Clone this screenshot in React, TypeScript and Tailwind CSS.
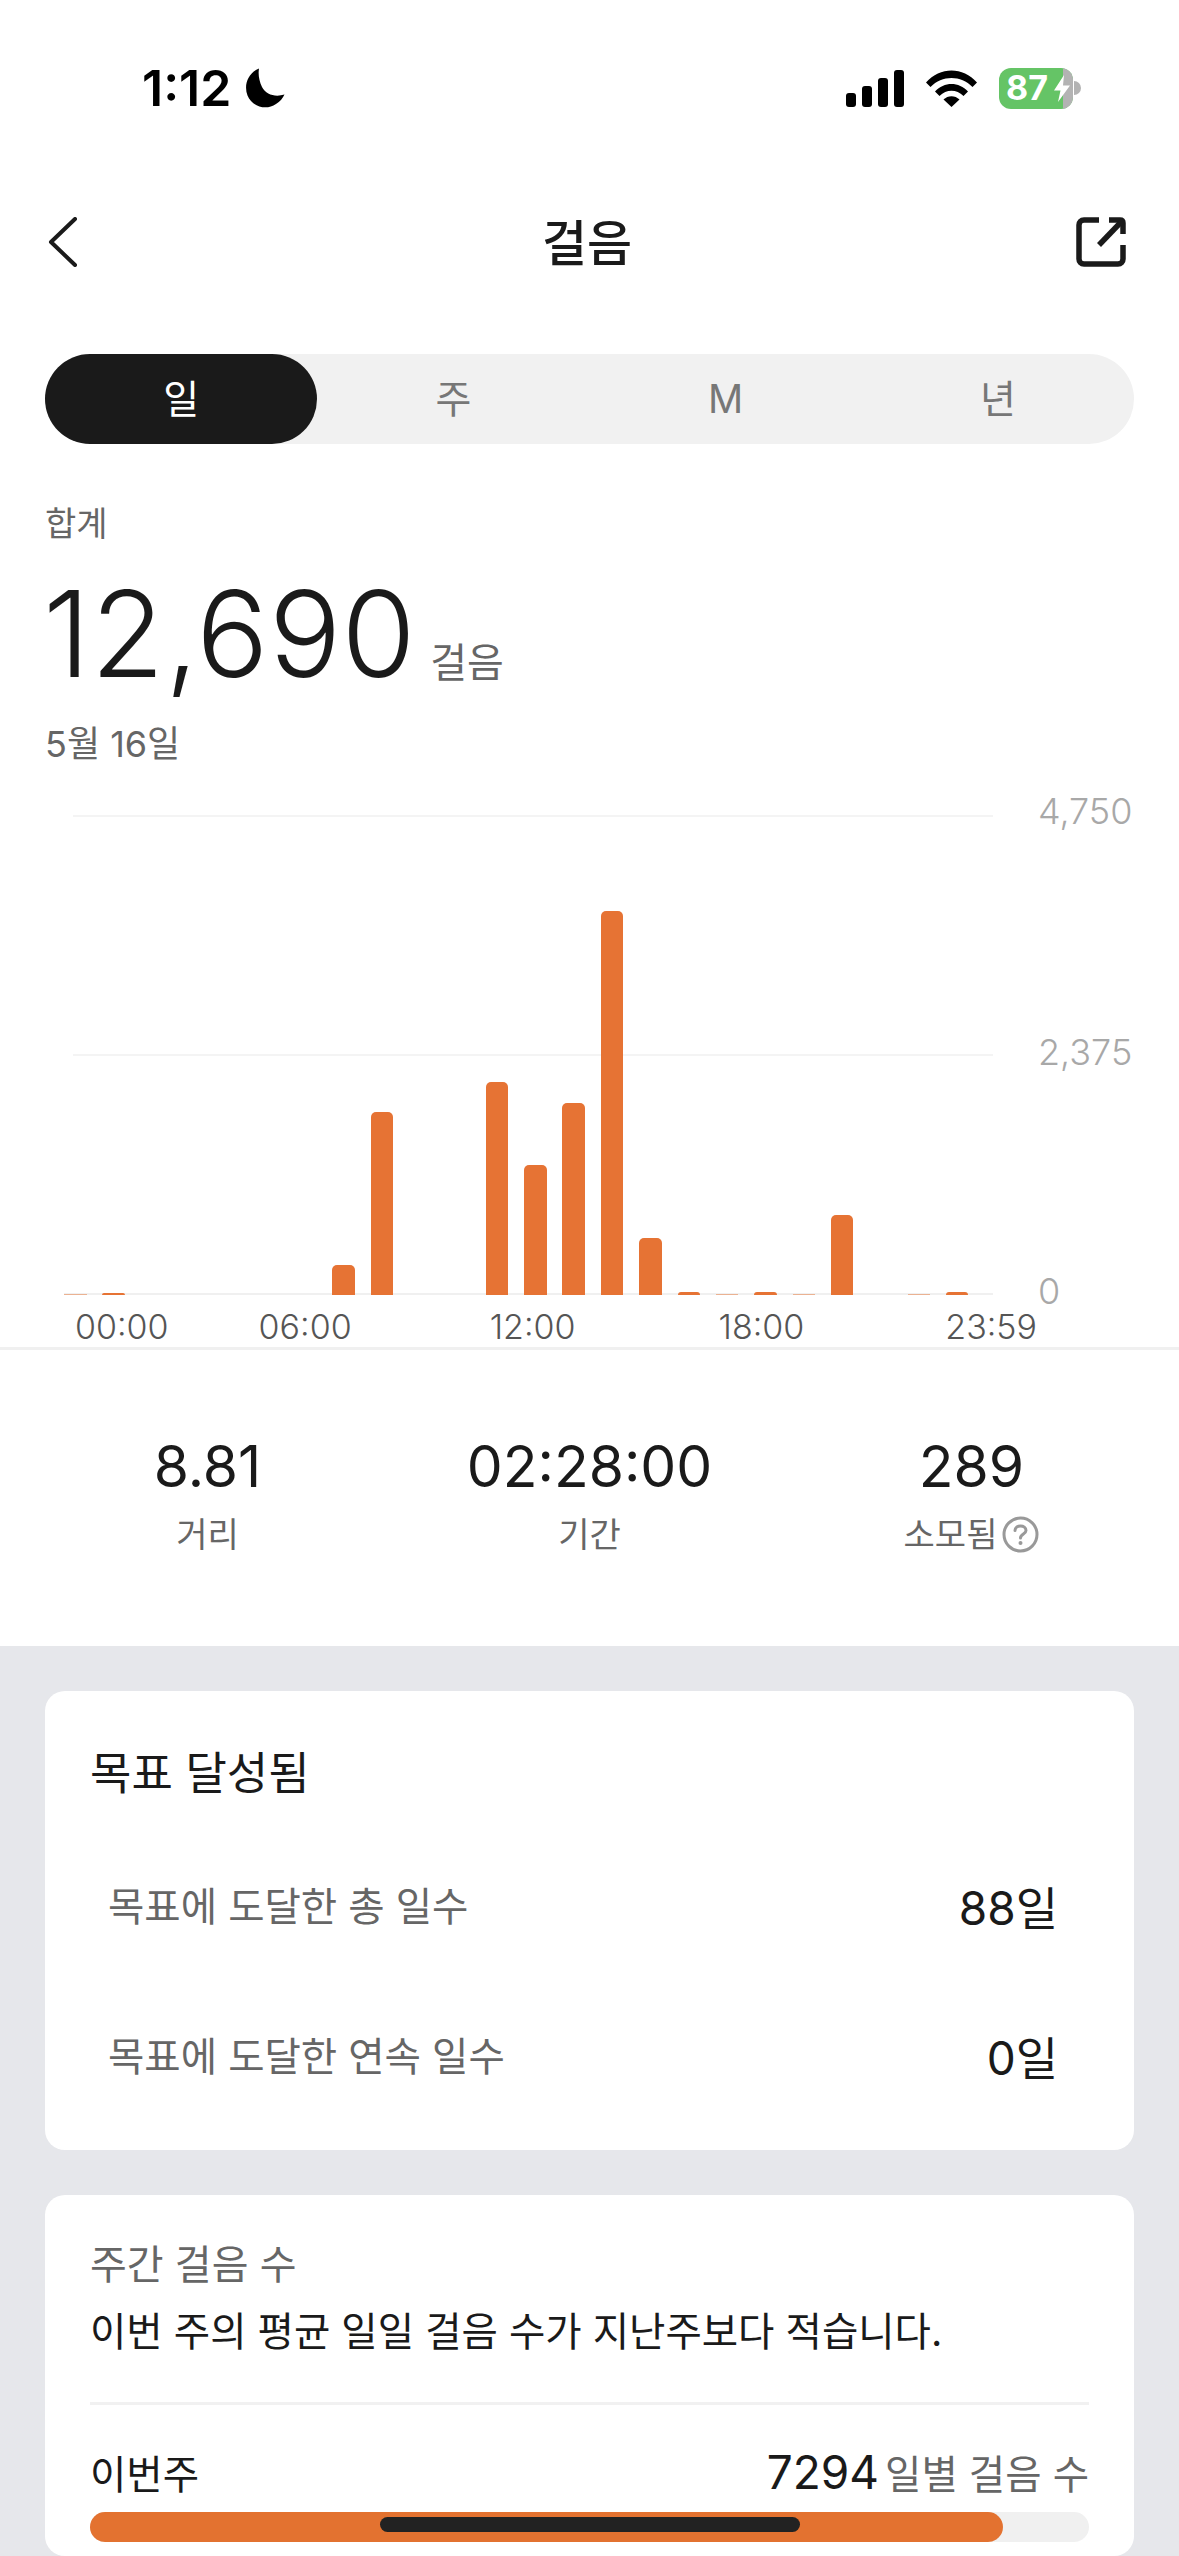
const BARS = [
  0.8, 2.5, 0, 0, 0, 0, 0, 30, 183, 0, 0, 213, 130, 192, 384, 57, 3, 1, 3, 1, 80, 0, 0.8, 3,
];

const TICKS = [
  { label: "00:00", className: "ml-[75px]" },
  { label: "06:00", className: "ml-[90px]" },
  { label: "12:00", className: "ml-[138px]" },
  { label: "18:00", className: "ml-[143px]" },
  { label: "23:59", className: "ml-[141px]" },
];

function StatusBar() {
  return (
    <div className="flex h-[176px] items-center justify-between pl-[142px] pr-[98px]">
      <div className="flex items-center gap-[14px]">
        <span className="text-[50px] font-semibold leading-none text-black">1:12</span>
        <svg width="40" height="40" viewBox="0 0 40 40">
          <path d="M14 0.5C3 5 -1.5 17 2.5 27.5C7 38.5 21 43 31 36C35 33.5 38 30 39.5 26.5C30 29.5 21 26.5 17 19C14 13 13 6 14 0.5Z" fill="#000" />
        </svg>
      </div>
      <div className="flex items-center">
        <div className="flex h-[38px] items-end gap-[5.5px]">
          <div className="h-[14px] w-[10.5px] rounded-[3px] bg-black" />
          <div className="h-[21px] w-[10.5px] rounded-[3px] bg-black" />
          <div className="h-[29px] w-[10.5px] rounded-[3px] bg-black" />
          <div className="h-[37px] w-[10.5px] rounded-[3px] bg-black" />
        </div>
        <svg className="ml-[22px]" width="51" height="37" viewBox="0 0 51 37">
          <path d="M0 12.5C14 -3.5 37 -3.5 51 12.5L46.5 17C35 5 16 5 4.5 17Z" fill="#000" />
          <path d="M9 21.5C18 11.5 33 11.5 42 21.5L37.5 26C30.5 19 20.5 19 13.5 26Z" fill="#000" />
          <path d="M17.5 29.5C22 25 29 25 33.5 29.5L25.5 37Z" fill="#000" />
        </svg>
        <div className="ml-[22px] flex items-center">
          <div className="relative flex h-[41px] w-[74px] items-center overflow-hidden rounded-[12px] bg-[#65c466] pl-[7px]">
            <span className="text-[34px] font-bold leading-none text-white">87</span>
            <div className="absolute right-0 top-0 h-full w-[10px] bg-[#b3b3b3]" />
            <svg className="absolute left-[55px] top-[7px]" width="16" height="27" viewBox="0 0 16 27">
              <path d="M10 0L0 15.5H6.5L4 27L16 10.5H9Z" fill="#fff" />
            </svg>
          </div>
          <div className="ml-[1px] h-[14px] w-[7px] rounded-r-full bg-[#b3b3b3]" />
        </div>
      </div>
    </div>
  );
}

function NavBar() {
  return (
    <div className="grid h-[132px] grid-cols-[1fr_auto_1fr] items-center pl-[48px] pr-[53px]">
      <svg width="30" height="50" viewBox="0 0 30 50" fill="none">
        <path d="M27 2L3 25L27 48" stroke="#1a1a1a" strokeWidth="4" strokeLinecap="round" strokeLinejoin="round" />
      </svg>
      <span className="mt-[2px] text-[49px] font-medium leading-none text-[#1a1a1a]">걸음</span>
      <svg className="justify-self-end" width="50" height="50" viewBox="0 0 50 50" fill="none">
        <path d="M23 3H8C5 3 3 5 3 8V42C3 45 5 47 8 47H42C45 47 47 45 47 42V28" stroke="#1a1a1a" strokeWidth="5.5" />
        <path d="M33 3H44C46 3 47 4 47 6V17" stroke="#1a1a1a" strokeWidth="5.5" />
        <path d="M47 3L23 28" stroke="#1a1a1a" strokeWidth="5.5" />
      </svg>
    </div>
  );
}

function RangeTabs() {
  const tabs = ["일", "주", "M", "년"];
  return (
    <div className="mx-[45px] mt-[46px] grid h-[90px] grid-cols-4 rounded-full bg-[#f1f1f1]">
      {tabs.map((tab, i) => (
        <div
          key={tab}
          className={
            i === 0
              ? "flex items-center justify-center rounded-full bg-[#1a1a1a] text-[39px] text-white"
              : "flex items-center justify-center text-[39px] text-[#777777]"
          }
        >
          {tab}
        </div>
      ))}
    </div>
  );
}

function Summary() {
  return (
    <div className="pl-[45px]">
      <div className="mt-[60px] text-[34px] leading-[40px] text-[#666666]">합계</div>
      <div className="mt-[30px] flex items-baseline">
        <span className="-ml-[2px] text-[120px] font-light leading-[120px] tracking-[0.5px] text-[#1a1a1a]">12,690</span>
        <span className="ml-[14px] text-[40px] leading-none text-[#666666]">걸음</span>
      </div>
      <div className="mt-[28px] text-[36px] leading-[44px] text-[#666666]">5월 16일</div>
    </div>
  );
}

function StepChart() {
  return (
    <div className="border-b-[3px] border-[#f0f0f0]">
      <div className="relative ml-[64px] mt-[49px] h-[480px] w-[929px]">
        <div className="absolute left-[9px] right-0 top-0 h-[2px] bg-[#f4f4f4]" />
        <div className="absolute left-[9px] right-0 top-[239px] h-[2px] bg-[#f4f4f4]" />
        <div className="absolute bottom-0 left-0 right-0 h-[2px] bg-[#f0f0f0]" />
        <div className="absolute left-[974px] top-[-26px] text-[36px] font-light leading-[44px] text-[#a8a8a8]">4,750</div>
        <div className="absolute left-[974px] top-[215px] text-[36px] font-light leading-[44px] text-[#a8a8a8]">2,375</div>
        <div className="absolute left-[974px] top-[454px] text-[36px] font-light leading-[44px] text-[#a8a8a8]">0</div>
        <div className="relative flex h-full items-end gap-[15.85px]">
          {BARS.map((h, i) => (
            <div
              key={i}
              className={h > 0 && h < 2 ? "w-[22.5px] bg-[#e67334] opacity-50" : "w-[22.5px] rounded-t-[5px] bg-[#e67334]"}
              style={{ height: h }}
            />
          ))}
        </div>
      </div>
      <div className="flex h-[52px] items-start pt-[14px] text-[34px] font-light leading-[36px] text-[#555555]">
        {TICKS.map((tick) => (
          <span key={tick.label} className={tick.className}>
            {tick.label}
          </span>
        ))}
      </div>
    </div>
  );
}

function Stat({ value, label, hint }: { value: string; label: string; hint?: boolean }) {
  return (
    <div className="flex flex-col items-center">
      <div className="text-[57px] font-normal leading-[72px] text-[#1a1a1a]">{value}</div>
      <div className="mt-[9px] flex h-[44px] items-center gap-[5px] text-[34px] text-[#666666]">
        <span>{label}</span>
        {hint && (
          <svg width="37" height="37" viewBox="0 0 37 37" fill="none">
            <circle cx="18.5" cy="18.5" r="16.5" stroke="#999999" strokeWidth="3" />
            <path d="M13 14.5C13 11.5 15.5 10 18.5 10C21.5 10 24 11.5 24 14.5C24 18 18.5 18 18.5 22" stroke="#999999" strokeWidth="3" strokeLinecap="round" />
            <circle cx="18.5" cy="27" r="2" fill="#999999" />
          </svg>
        )}
      </div>
    </div>
  );
}

function GoalRow({ label, value }: { label: string; value: string }) {
  return (
    <div className="flex h-[150px] items-center justify-between pl-[18px] pr-[31px]">
      <span className="text-[39.5px] leading-none text-[#666666]">{label}</span>
      <span className="text-[46px] font-normal leading-none text-[#1a1a1a]">{value}</span>
    </div>
  );
}

export default function App() {
  return (
    <div className="h-[2556px] w-[1179px] overflow-hidden bg-white font-['Inter','Noto_Sans_CJK_KR',sans-serif]">
      <StatusBar />
      <NavBar />
      <RangeTabs />
      <Summary />
      <StepChart />

      <div className="grid h-[296px] grid-cols-3 px-[16.5px] pt-[81px]">
        <Stat value="8.81" label="거리" />
        <Stat value="02:28:00" label="기간" />
        <Stat value="289" label="소모됨" hint />
      </div>

      <div className="flex h-[910px] flex-col gap-[45px] bg-[#e6e7eb] px-[45px] pt-[45px]">
        <div className="h-[459px] rounded-[20px] bg-white pl-[45px] pr-[45px] pt-[56px]">
          <div className="text-[45px] leading-[54px] text-[#1a1a1a]">목표 달성됨</div>
          <div className="mt-[32px]">
            <GoalRow label="목표에 도달한 총 일수" value="88일" />
            <GoalRow label="목표에 도달한 연속 일수" value="0일" />
          </div>
        </div>

        <div className="flex-1 rounded-[20px] bg-white px-[45px] pt-[46px]">
          <div className="text-[40px] leading-[48px] text-[#666666]">주간 걸음 수</div>
          <div className="mt-[19px] text-[39.5px] leading-[48px] text-[#1a1a1a]">이번 주의 평균 일일 걸음 수가 지난주보다 적습니다.</div>
          <div className="mt-[46px] h-[3px] bg-[#f1f1f1]" />
          <div className="mt-[43px] flex items-baseline justify-between">
            <span className="text-[39.5px] leading-[48px] text-[#1a1a1a]">이번주</span>
            <div className="flex items-baseline gap-[6px]">
              <span className="text-[46px] leading-[48px] text-[#1a1a1a]">7294</span>
              <span className="text-[39.5px] leading-[48px] text-[#666666]">일별 걸음 수</span>
            </div>
          </div>
          <div className="mt-[13px] h-[30px] rounded-full bg-[#f0f0f0]">
            <div className="h-full w-[913px] rounded-full bg-[#e37230]" />
          </div>
        </div>
      </div>

      {/* iOS home indicator */}
      <div className="absolute left-[380px] top-[2517px] h-[15px] w-[420px] rounded-full bg-[#222222]" />
    </div>
  );
}
